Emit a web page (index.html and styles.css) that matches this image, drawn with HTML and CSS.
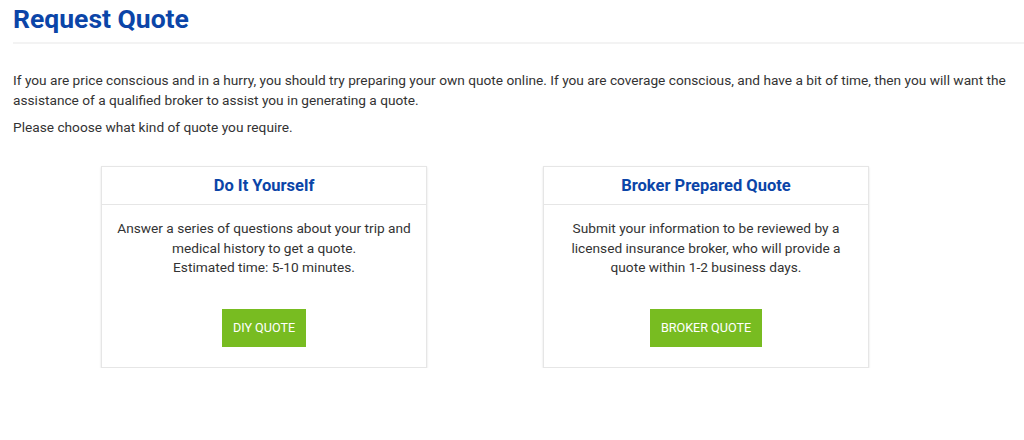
FILE: index.html
```html
<!DOCTYPE html>
<html lang="en">
<head>
  <meta charset="UTF-8">
  <meta name="viewport" content="width=device-width, initial-scale=1.0">
  <title>Request Quote</title>
  <link rel="stylesheet" href="styles.css">
</head>
<body>
  <div class="page">
    <h1 class="page-title">Request Quote</h1>

    <p class="intro">If you are price conscious and in a hurry, you should try preparing your own quote online. If you are coverage conscious, and have a bit of time, then you will want the assistance of a qualified broker to assist you in generating a quote.</p>
    <p class="intro">Please choose what kind of quote you require.</p>

    <div class="quote-options">
      <div class="quote-card">
        <h3 class="card-title">Do It Yourself</h3>
        <div class="card-body">
          <p>Answer a series of questions about your trip and medical history to get a quote.<br>Estimated time: 5-10 minutes.</p>
          <a class="quote-btn" href="#">DIY QUOTE</a>
        </div>
      </div>

      <div class="quote-card">
        <h3 class="card-title">Broker Prepared Quote</h3>
        <div class="card-body">
          <p>Submit your information to be reviewed by a licensed insurance broker, who will provide a quote within 1-2 business days.</p>
          <a class="quote-btn" href="#">BROKER QUOTE</a>
        </div>
      </div>
    </div>
  </div>
</body>
</html>
```

FILE: styles.css
```css
body {
  margin: 0;
  font-family: Roboto, "Liberation Sans", Arial, sans-serif;
  font-size: 13.7px;
  line-height: 20px;
  color: #333;
  background-color: #fff;
}

.page {
  padding: 0 0 0 13px;
}

.page-title {
  margin: 0;
  padding: 4px 0 8px;
  font-size: 26.5px;
  line-height: 30px;
  font-weight: 700;
  color: #0b45a8;
  border-bottom: 2px solid #f3f3f3;
}

.intro {
  margin: 0 10px 7px 0;
}

.page-title + .intro {
  margin-top: 26px;
}

.quote-options {
  display: flex;
  gap: 116px;
  padding-left: 88px;
  margin-top: 29px;
}

.quote-card {
  width: 324px;
  border: 1px solid #e6e6e6;
  box-shadow: 0 1px 2px rgba(0, 0, 0, 0.12);
  text-align: center;
}

.card-title {
  margin: 0;
  padding: 9px 10px 8px;
  font-size: 16.5px;
  line-height: 20px;
  font-weight: 700;
  color: #0b45a8;
  border-bottom: 1px solid #e6e6e6;
}

.card-body {
  padding: 14px 15px 20px;
}

.card-body p {
  margin: 0 0 31px;
  line-height: 19.5px;
}

.quote-btn {
  display: inline-block;
  padding: 9px 11px;
  font-size: 12.6px;
  line-height: 20px;
  color: #fff;
  background-color: #78bc21;
  text-decoration: none;
}
```
